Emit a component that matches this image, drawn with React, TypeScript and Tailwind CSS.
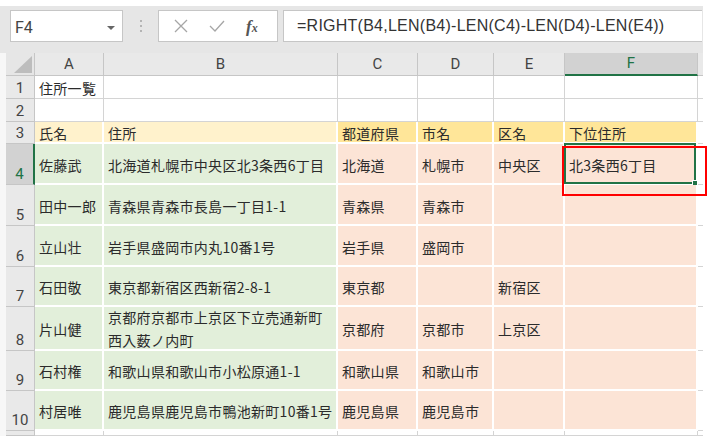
import React from "react";

type Fill = "none" | "green" | "peach" | "ylight" | "ydark";

const fillClass: Record<Fill, string> = {
  none: "bg-white border-r border-b border-[#d4d4d4]",
  green: "bg-[#e2efda] border-r-2 border-b-2 border-white",
  peach: "bg-[#fce4d6] border-r-2 border-b-2 border-white",
  ylight: "bg-[#fff2cc] border-r-2 border-b-2 border-white",
  ydark: "bg-[#ffe699] border-r-2 border-b-2 border-white",
};

const rowHeights = ["h-[23px]", "h-[23px]", "h-[22px]", "h-[41px]", "h-[41px]", "h-[41px]", "h-[40px]", "h-[44px]", "h-[40px]", "h-[40px]", "h-[5px]"];

const data: (string | string[])[][] = [
  ["住所一覧", "", "", "", "", ""],
  ["", "", "", "", "", ""],
  ["氏名", "住所", "都道府県", "市名", "区名", "下位住所"],
  ["佐藤武", "北海道札幌市中央区北3条西6丁目", "北海道", "札幌市", "中央区", "北3条西6丁目"],
  ["田中一郎", "青森県青森市長島一丁目1-1", "青森県", "青森市", "", ""],
  ["立山壮", "岩手県盛岡市内丸10番1号", "岩手県", "盛岡市", "", ""],
  ["石田敬", "東京都新宿区西新宿2-8-1", "東京都", "", "新宿区", ""],
  ["片山健", ["京都府京都市上京区下立売通新町", "西入薮ノ内町"], "京都府", "京都市", "上京区", ""],
  ["石村権", "和歌山県和歌山市小松原通1-1", "和歌山県", "和歌山市", "", ""],
  ["村居唯", "鹿児島県鹿児島市鴨池新町10番1号", "鹿児島県", "鹿児島市", "", ""],
  ["", "", "", "", "", ""],
];

function fillFor(r: number, c: number): Fill {
  if (r === 2) return c < 2 ? "ylight" : "ydark";
  if (r >= 3 && r <= 9) return c < 2 ? "green" : "peach";
  return "none";
}

const colLetters = ["A", "B", "C", "D", "E", "F"];

export default function App() {
  const font = { fontFamily: '"Noto Sans CJK JP", "Noto Sans", sans-serif' };
  return (
    <div className="relative w-[711px] h-[436px] overflow-hidden bg-white">
      {/* toolbar */}
      <div className="w-[703px] h-[53px] flex flex-col">
        <div className="h-[6px] bg-white" />
        <div className="flex-1 bg-[#e6e6e6] flex items-start pt-[4px] pl-[10px]">
          <div className="w-[113px] h-[32px] bg-white border border-[#c6c6c6] flex items-end justify-between pb-[3px] pl-[4px] pr-[7px]">
            <span className="text-[16px] text-[#444] leading-[20px]" style={{ fontFamily: "Roboto, sans-serif" }}>F4</span>
            <svg width="8" height="5" viewBox="0 0 8 5" className="mb-[7px]">
              <polygon points="0,0 8,0 4,4" fill="#666" />
            </svg>
          </div>
          <div className="w-[35px] h-[32px] flex flex-col items-center justify-center gap-[3px]">
            <div className="w-[2px] h-[2px] bg-[#b4b4b4]" />
            <div className="w-[2px] h-[2px] bg-[#b4b4b4]" />
            <div className="w-[2px] h-[2px] bg-[#b4b4b4]" />
          </div>
          <div className="w-[120px] h-[32px] bg-white border border-[#c6c6c6] flex items-center pl-[12px]">
            <svg width="16" height="16" viewBox="0 0 16 16" className="ml-[2px]">
              <path d="M2 2 L14 14 M14 2 L2 14" stroke="#a6a6a6" strokeWidth="1.3" fill="none" />
            </svg>
            <svg width="18" height="16" viewBox="0 0 18 16" className="ml-[19px]">
              <path d="M2 8 L7 13 L16 3" stroke="#a6a6a6" strokeWidth="1.3" fill="none" />
            </svg>
            <span className="ml-[20px] text-[17px] italic font-bold text-[#555] leading-none" style={{ fontFamily: '"Liberation Serif", serif' }}>
              f<span className="text-[12px]">x</span>
            </span>
          </div>
          <div className="ml-[5px] w-[419px] h-[32px] bg-white border border-[#c6c6c6] border-r-0 flex items-center pl-[13px]">
            <span className="text-[16px] text-[#333] leading-none tracking-[0.25px]" style={{ fontFamily: '"Liberation Sans", sans-serif' }}>
              =RIGHT(B4,LEN(B4)-LEN(C4)-LEN(D4)-LEN(E4))
            </span>
          </div>
        </div>
      </div>

      {/* grid */}
      <div className="flex">
        <div className="w-[6px] h-[383px] bg-[#f7f7f7]" />
        <div className="grid grid-cols-[29px_69px_234px_80px_76px_71px_133px_5px]">
          {/* header row */}
          <div className="h-[23px] bg-[#e6e6e6] border-r border-b border-[#c6c6c6] relative">
            <svg width="18" height="17" viewBox="0 0 18 17" className="absolute right-[2px] bottom-[2px]">
              <polygon points="18,0 18,17 0,17" fill="#bdbdbd" />
            </svg>
          </div>
          {colLetters.map((l, i) => (
            <div
              key={l}
              className={
                i === 5
                  ? "h-[23px] bg-[#d2d2d2] border-r border-[#c6c6c6] border-b-2 border-b-[#217346] flex items-center justify-center text-[15px] text-[#217346]"
                  : "h-[23px] bg-[#e9e9e9] border-r border-b border-[#c6c6c6] flex items-center justify-center text-[15px] text-[#444]"
              }
              style={{ fontFamily: "Roboto, sans-serif" }}
            >
              {l}
            </div>
          ))}
          <div className="h-[23px] bg-[#e9e9e9] border-b border-[#c6c6c6]" />

          {data.map((row, r) => (
            <React.Fragment key={r}>
              <div
                className={
                  (r === 3
                    ? "bg-[#d2d2d2] border-r-2 border-r-[#217346] border-b border-b-[#c6c6c6] text-[#217346] "
                    : "bg-[#e9e9e9] border-r border-b border-[#c6c6c6] text-[#444] ") +
                  rowHeights[r] +
                  " flex items-end justify-center pb-[1px] text-[15px] leading-[18px] overflow-hidden"
                }
                style={{ fontFamily: "Roboto, sans-serif" }}
              >
                {r < 10 ? r + 1 : ""}
              </div>
              {row.map((v, c) => (
                <div
                  key={c}
                  className={
                    fillClass[fillFor(r, c)] +
                    " " +
                    rowHeights[r] +
                    " relative flex items-center pl-[4px] pt-[2px] text-[14px] text-[#2b2b2b] tracking-[0.3px] whitespace-nowrap"
                  }
                  style={font}
                >
                  {Array.isArray(v) ? (
                    <div className="flex flex-col leading-[23px]">
                      {v.map((t) => (
                        <span key={t}>{t}</span>
                      ))}
                    </div>
                  ) : (
                    <span className="leading-[18px]">{v}</span>
                  )}
                  {r === 3 && c === 5 && (
                    <div className="absolute left-[-1px] top-[-1px] right-[0px] bottom-[-1px] border-2 border-[#217346]">
                      <div className="absolute right-[-4px] bottom-[-4px] w-[6px] h-[6px] bg-[#217346] border border-white" />
                    </div>
                  )}
                </div>
              ))}
              <div className={rowHeights[r] + " bg-white border-b border-[#d4d4d4]"} />
            </React.Fragment>
          ))}
        </div>
      </div>

      {/* red annotation */}
      <div className="absolute left-[562px] top-[146px] w-[145px] h-[50px] border-2 border-[#ff0000]" />
    </div>
  );
}
